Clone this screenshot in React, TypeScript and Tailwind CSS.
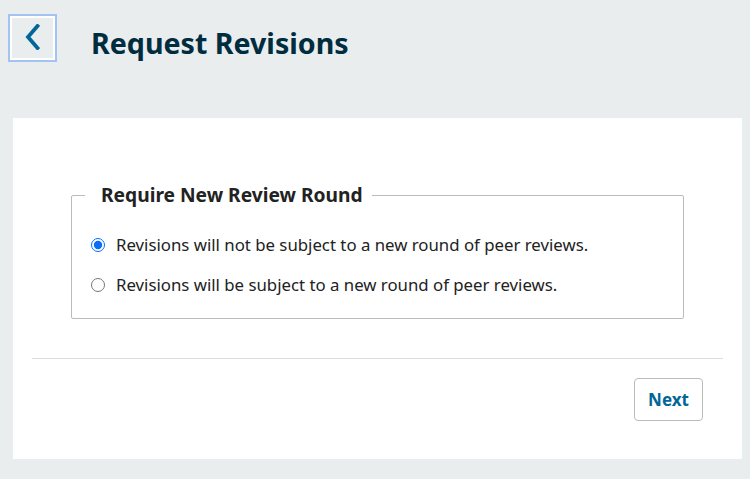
import React from "react";

export default function App() {
  return (
    <div className="min-h-[479px] bg-[#eaedee] pb-[20px] pl-[13px] pr-[8px] text-[#222]" style={{ fontFamily: '"Noto Sans", sans-serif' }}>
      <div className="flex h-[118px] items-start pt-[14px]">
        <button className="-ml-[5px] flex h-[48px] w-[49px] items-center justify-center border-2 border-[#a3c4f3] bg-[#eaedee] shadow-[inset_0_0_0_2px_#fff]">
          <svg width="16" height="26" viewBox="0 0 16 26" fill="none" className="-mt-[2px] -ml-[1px]">
            <path d="M13.5 2 L4 13 L13.5 24" stroke="#006798" strokeWidth="3.8" strokeLinecap="square" />
          </svg>
        </button>
        <h1 className="ml-[34px] mt-[11px] text-[28.6px] font-bold leading-[36px] text-[#002c40]">Request Revisions</h1>
      </div>
      <div className="bg-white px-[19px] pb-[38px] pt-[66px]">
        <div className="px-[39px]">
          <fieldset className="rounded-[2px] border border-[#bbb] pb-[23px] pl-[13px] pr-[13px]">
            <legend className="pl-[16px] pr-[9px] text-[19.2px] font-bold leading-[22px] text-[#222]">Require New Review Round</legend>
            <div className="flex flex-col gap-[20px] pt-[29px] pl-[6px]">
              <label className="flex h-[20px] items-center gap-[11px] text-[16.8px]">
                <input type="radio" name="r" defaultChecked className="m-0 h-[14px] w-[14px] accent-[#0b6ef8]" />
                <span>Revisions will not be subject to a new round of peer reviews.</span>
              </label>
              <label className="flex h-[20px] items-center gap-[11px] text-[16.8px]">
                <input type="radio" name="r" className="m-0 h-[14px] w-[14px]" />
                <span>Revisions will be subject to a new round of peer reviews.</span>
              </label>
            </div>
          </fieldset>
        </div>
        <div className="mt-[39px] border-t border-[#ddd] pt-[19px]">
          <div className="flex justify-end pr-[20px]">
            <button className="h-[43px] w-[69px] rounded-[4px] border border-[#bbb] bg-white text-[17px] font-bold text-[#006798]">Next</button>
          </div>
        </div>
      </div>
    </div>
  );
}
